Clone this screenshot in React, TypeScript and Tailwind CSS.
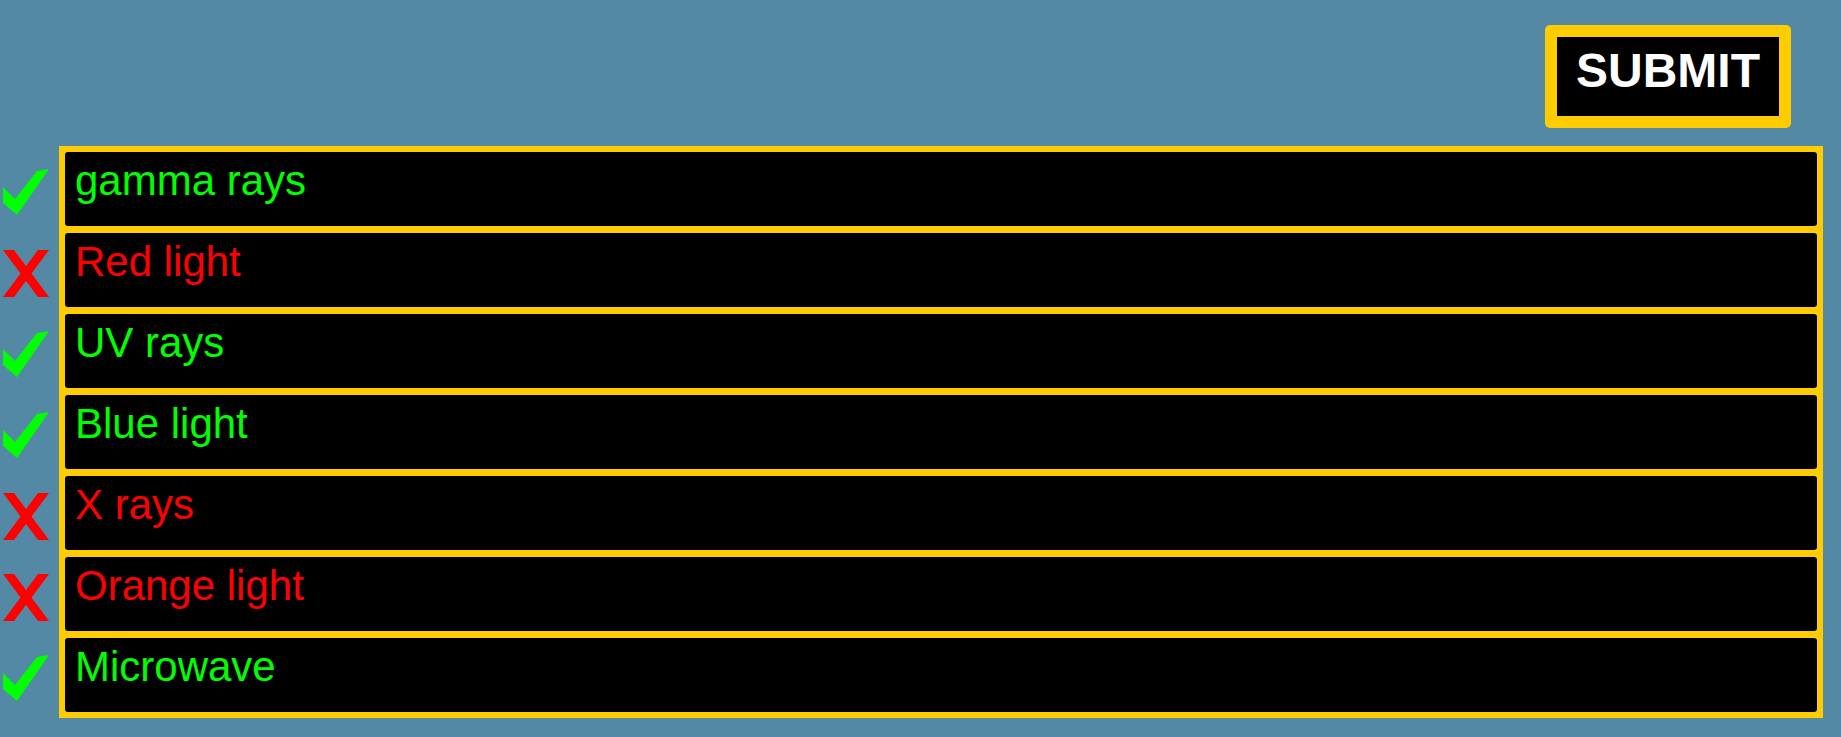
import React from 'react';

type Answer = { label: string; correct: boolean };

const answers: Answer[] = [
  { label: 'gamma rays', correct: true },
  { label: 'Red light', correct: false },
  { label: 'UV rays', correct: true },
  { label: 'Blue light', correct: true },
  { label: 'X rays', correct: false },
  { label: 'Orange light', correct: false },
  { label: 'Microwave', correct: true },
];

const Check = () => (
  <svg width="46" height="47" viewBox="0 0 46 47" className="block">
    <polygon points="0,18 12,30 34,2 46,0 14,46 0,34" fill="#00ff00" />
  </svg>
);

const Cross = () => (
  <svg width="46" height="47" viewBox="0 0 46 47" className="block">
    <polygon points="0,0 11,0 46,47 35,47" fill="#ff0000" />
    <polygon points="35,0 46,0 11,47 0,47" fill="#ff0000" />
  </svg>
);

export default function App() {
  return (
    <div
      className="w-[1841px] h-[737px] bg-[#5489a5] overflow-hidden"
      style={{ fontFamily: '"Liberation Sans", Arial, sans-serif' }}
    >
      <div className="flex justify-end pt-[25px] pr-[50px]">
        <button className="w-[246px] h-[103px] rounded-[5px] bg-[#ffcc00] p-[12px]">
          <div className="h-full bg-black flex justify-center pt-[6px]">
            <span className="text-white font-bold text-[48px] leading-[55px]">SUBMIT</span>
          </div>
        </button>
      </div>

      <div className="flex mt-[18px]">
        <div className="w-[59px] flex flex-col gap-[34px] pt-[23px] pl-[3px]">
          {answers.map((a) => (
            <div key={a.label}>{a.correct ? <Check /> : <Cross />}</div>
          ))}
        </div>
        <div className="w-[1764px] bg-[#ffcc00] p-[6px] flex flex-col gap-[7px]">
          {answers.map((a) => (
            <div
              key={a.label}
              className="h-[74px] bg-black rounded-[3px] pl-[10px] pt-[5px]"
            >
              <span
                className={`text-[42px] leading-[48px] ${a.correct ? 'text-[#00ff00]' : 'text-[#ff0000]'}`}
              >
                {a.label}
              </span>
            </div>
          ))}
        </div>
      </div>
    </div>
  );
}
